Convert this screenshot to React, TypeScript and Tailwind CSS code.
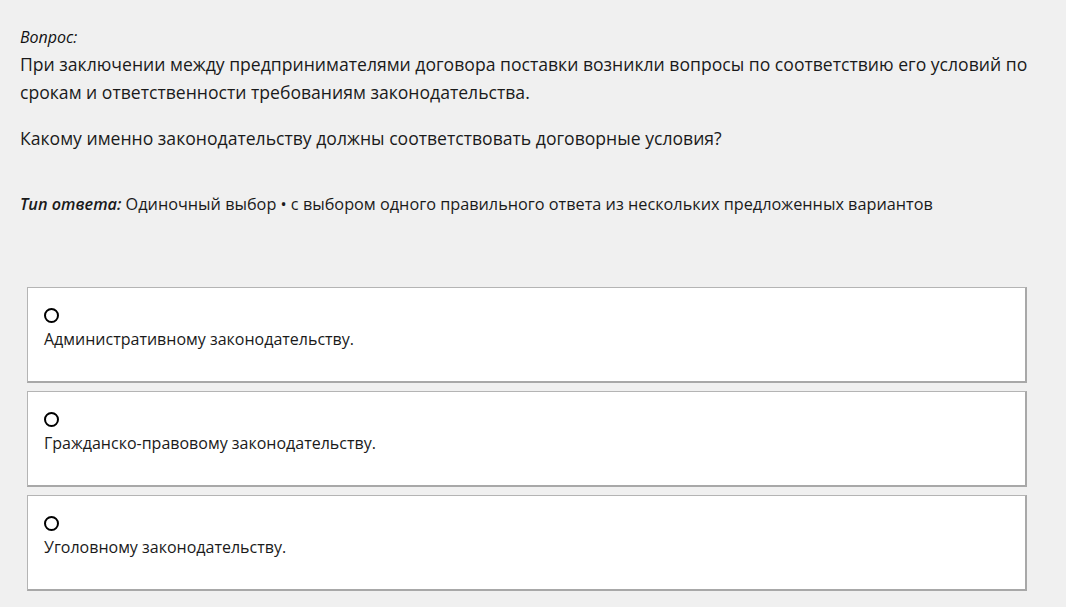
import React from "react";

const OPTIONS = [
  "Административному законодательству.",
  "Гражданско-правовому законодательству.",
  "Уголовному законодательству.",
];

export default function App() {
  return (
    <div
      className="min-h-[607px] bg-[#f0f0f0] text-[#1a1a1a]"
      style={{ fontFamily: '"Open Sans", "Noto Sans", sans-serif' }}
    >
      <div className="px-5 pt-[26px]">
        <div className="text-[16px] italic leading-[22px] text-[#111]">Вопрос:</div>
        <p className="mt-[2px] text-[17.6px] leading-[28px]">
          При заключении между предпринимателями договора поставки возникли вопросы по соответствию его условий по
          срокам и ответственности требованиям законодательства.
        </p>
        <p className="mt-[18px] text-[17.6px] leading-[28px]">
          Какому именно законодательству должны соответствовать договорные условия?
        </p>
        <p className="mt-[41px] text-[16.25px] leading-[22px]">
          <span className="font-semibold italic">Тип ответа:</span> Одиночный выбор • с выбором одного правильного
          ответа из нескольких предложенных вариантов
        </p>
      </div>

      <div className="mt-[72px] ml-[27px] w-[1000px] flex flex-col gap-2">
        {OPTIONS.map((opt) => (
          <label
            key={opt}
            className="h-[96px] bg-white border border-[#b4b4b4] border-b-2 border-r-2 border-b-[#a8a8a8] border-r-[#a8a8a8] px-4 pt-[20px] flex flex-col gap-[5px] cursor-pointer"
          >
            <span className="w-[15px] h-[15px] rounded-full border-2 border-black" />
            <span className="text-[16px] leading-[22px]">{opt}</span>
          </label>
        ))}
      </div>
    </div>
  );
}
